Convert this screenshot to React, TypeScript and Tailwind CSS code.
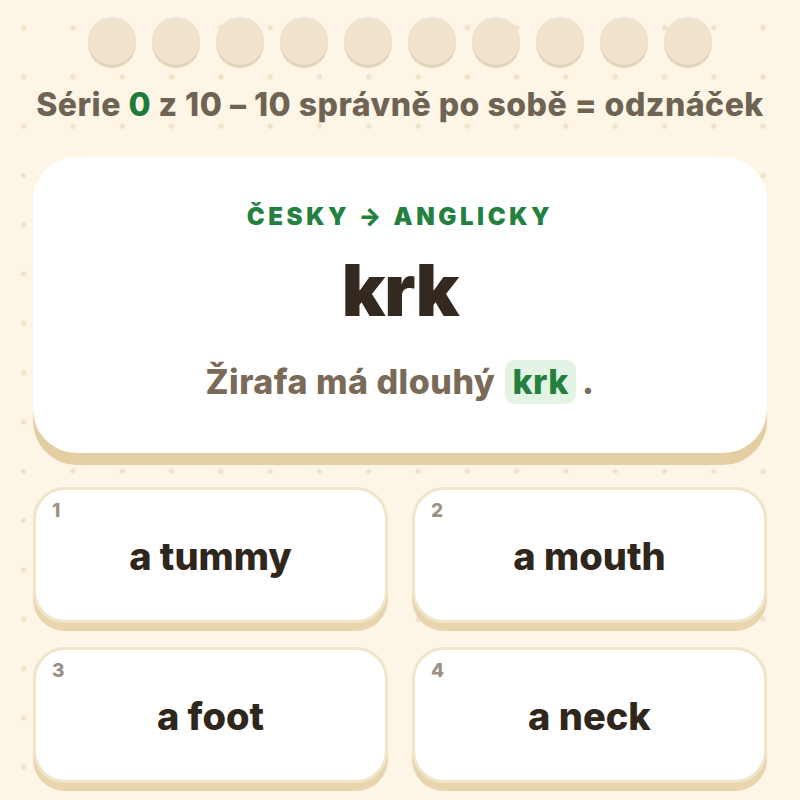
import React from 'react';

const options = [
  { n: 1, label: 'a tummy' },
  { n: 2, label: 'a mouth' },
  { n: 3, label: 'a foot' },
  { n: 4, label: 'a neck' },
];

export default function App() {
  return (
    <div
      className="min-h-screen w-full bg-[#fdf6e6] bg-[radial-gradient(circle,#f1e3c7_2.4px,transparent_3px)] bg-[size:49.3px_49.3px] bg-[position:-1px_3px] flex flex-col items-center px-[33px] pt-[17px] pb-10"
      style={{ fontFamily: 'Inter, "Noto Sans", sans-serif' }}
    >
      {/* streak dots */}
      <div className="flex gap-4">
        {Array.from({ length: 10 }).map((_, i) => (
          <div key={i} className="w-12 h-12 rounded-full bg-[#efe3cd] shadow-[0_3px_0_#e2d4b9]" />
        ))}
      </div>

      <p className="mt-[22px] text-[32px] leading-[36px] font-extrabold tracking-[0.5px] text-[#6f6354] whitespace-nowrap">
        Série <span className="text-[#1f7a3c]">0</span> z 10 – 10 správně po sobě = odznáček
      </p>

      {/* prompt card */}
      <div className="mt-[34px] w-full h-[296px] rounded-[44px] bg-white shadow-[0_12px_0_#e3cfa3] flex flex-col items-center pt-[44px]">
        <div className="text-[24px] leading-[32px] font-black tracking-[0.15em] text-[#23803f]">
          ČESKY → ANGLICKY
        </div>
        <div className="mt-[17px] text-[72px] leading-[80px] font-black text-[#33291e] tracking-[-1px]">krk</div>
        <div className="mt-[30px] flex items-center text-[34px] leading-[44px] font-extrabold tracking-[0.5px] text-[#7a6a58]">
          <span>Žirafa má dlouhý</span>
          <span className="ml-[10px] px-[7px] rounded-[10px] bg-[#e3f4e5] text-[#23803f] leading-[44px]">krk</span>
          <span className="ml-[6px]">.</span>
        </div>
      </div>

      {/* answers */}
      <div className="mt-[34px] w-full grid grid-cols-2 gap-x-6 gap-y-6">
        {options.map((o) => (
          <div
            key={o.n}
            className="relative h-[136px] rounded-[32px] border-[3px] border-[#f0e4c9] bg-white shadow-[0_8px_0_#e8d5ad] flex items-center justify-center"
          >
            <span className="absolute left-[16px] top-[7px] text-[19px] font-extrabold text-[#9c9186]">{o.n}</span>
            <span className="mt-[2px] text-[38px] font-extrabold text-[#2f261c]">{o.label}</span>
          </div>
        ))}
      </div>
    </div>
  );
}
